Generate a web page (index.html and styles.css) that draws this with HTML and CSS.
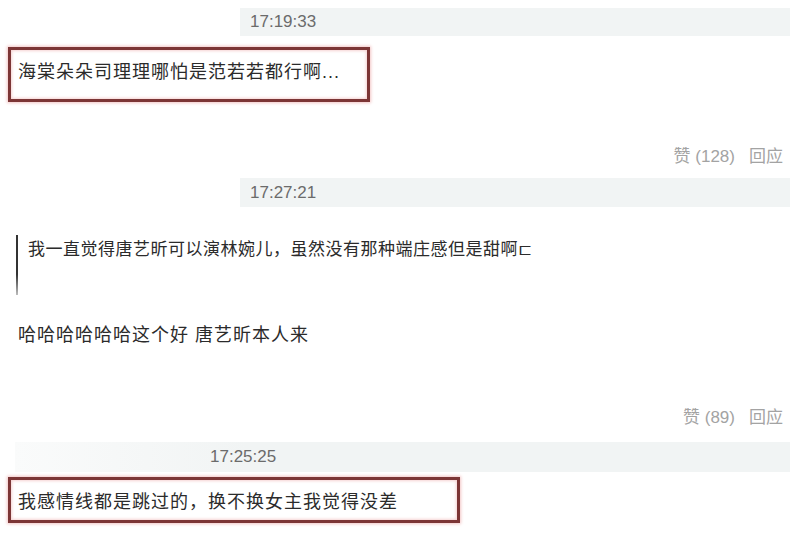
FILE: index.html
```html
<!DOCTYPE html>
<html lang="zh-CN">
<head>
  <meta charset="UTF-8">
  <meta name="viewport" content="width=device-width, initial-scale=1">
  <title>评论</title>
  <link rel="stylesheet" href="styles.css">
</head>
<body>
  <div class="comments">
    <div class="time-bar"><span class="time">17:19:33</span></div>
    <div class="marked box-first">海棠朵朵司理理哪怕是范若若都行啊...</div>
    <div class="actions actions-first"><span class="like">赞 (128)</span><span class="reply">回应</span></div>

    <div class="time-bar bar-second"><span class="time">17:27:21</span></div>
    <div class="quote">我一直觉得唐艺昕可以演林婉儿，虽然没有那种端庄感但是甜啊⊏</div>
    <div class="text">哈哈哈哈哈哈这个好 唐艺昕本人来</div>
    <div class="actions actions-second"><span class="like">赞 (89)</span><span class="reply">回应</span></div>

    <div class="time-bar bar-third"><span class="time">17:25:25</span></div>
    <div class="marked box-last">我感情线都是跳过的，换不换女主我觉得没差</div>
  </div>
</body>
</html>
```

FILE: styles.css
```css
* {
  box-sizing: border-box;
}

body {
  margin: 0;
  background-color: #ffffff;
  font-family: "Liberation Sans", "Noto Sans CJK SC", sans-serif;
  color: #2b2b2b;
  height: 533px;
  overflow: hidden;
}

.comments {
  display: flex;
  flex-direction: column;
}

.time-bar {
  margin: 8px 10px 0 240px;
  height: 28px;
  padding-left: 10px;
  background-color: #f1f4f4;
  display: flex;
  align-items: center;
}

.time {
  font-size: 17px;
  color: #6b6b6b;
}

.bar-second {
  margin-top: 11px;
  height: 29px;
}

.bar-third {
  margin: 14px 10px 0 15px;
  height: 30px;
  padding-left: 195px;
  background: linear-gradient(to right, #fafbfb, #f1f4f4 30%);
}

.marked {
  margin-left: 8px;
  border: 3px solid #7c3636;
  box-shadow: 0 0 3px 1px #f3c6c6, inset 0 0 3px 1px #f6d2d2;
  padding-left: 7px;
  font-size: 18px;
  line-height: 24px;
  letter-spacing: 1px;
  white-space: nowrap;
}

.box-first {
  margin-top: 11px;
  width: 362px;
  height: 55px;
  padding-top: 10px;
}

.box-last {
  margin-top: 5px;
  width: 452px;
  height: 46px;
  padding-top: 10px;
}

.actions {
  display: flex;
  justify-content: flex-end;
  margin-right: 17px;
  font-size: 17px;
  line-height: 20px;
  color: #a3a3a3;
}

.actions-first {
  margin-top: 45px;
}

.actions-second {
  margin-top: 61px;
}

.reply {
  margin-left: 14px;
}

.quote {
  margin: 28px 0 0 16px;
  height: 60px;
  padding: 3px 0 0 10px;
  border-left: 2px solid #3a3a3a;
  border-image: linear-gradient(#333 65%, #c4c4c4) 1;
  font-size: 17px;
  line-height: 24px;
  letter-spacing: 0.5px;
  white-space: nowrap;
}

.text {
  margin: 28px 0 0 18px;
  font-size: 18px;
  line-height: 24px;
  letter-spacing: 1px;
}
```
